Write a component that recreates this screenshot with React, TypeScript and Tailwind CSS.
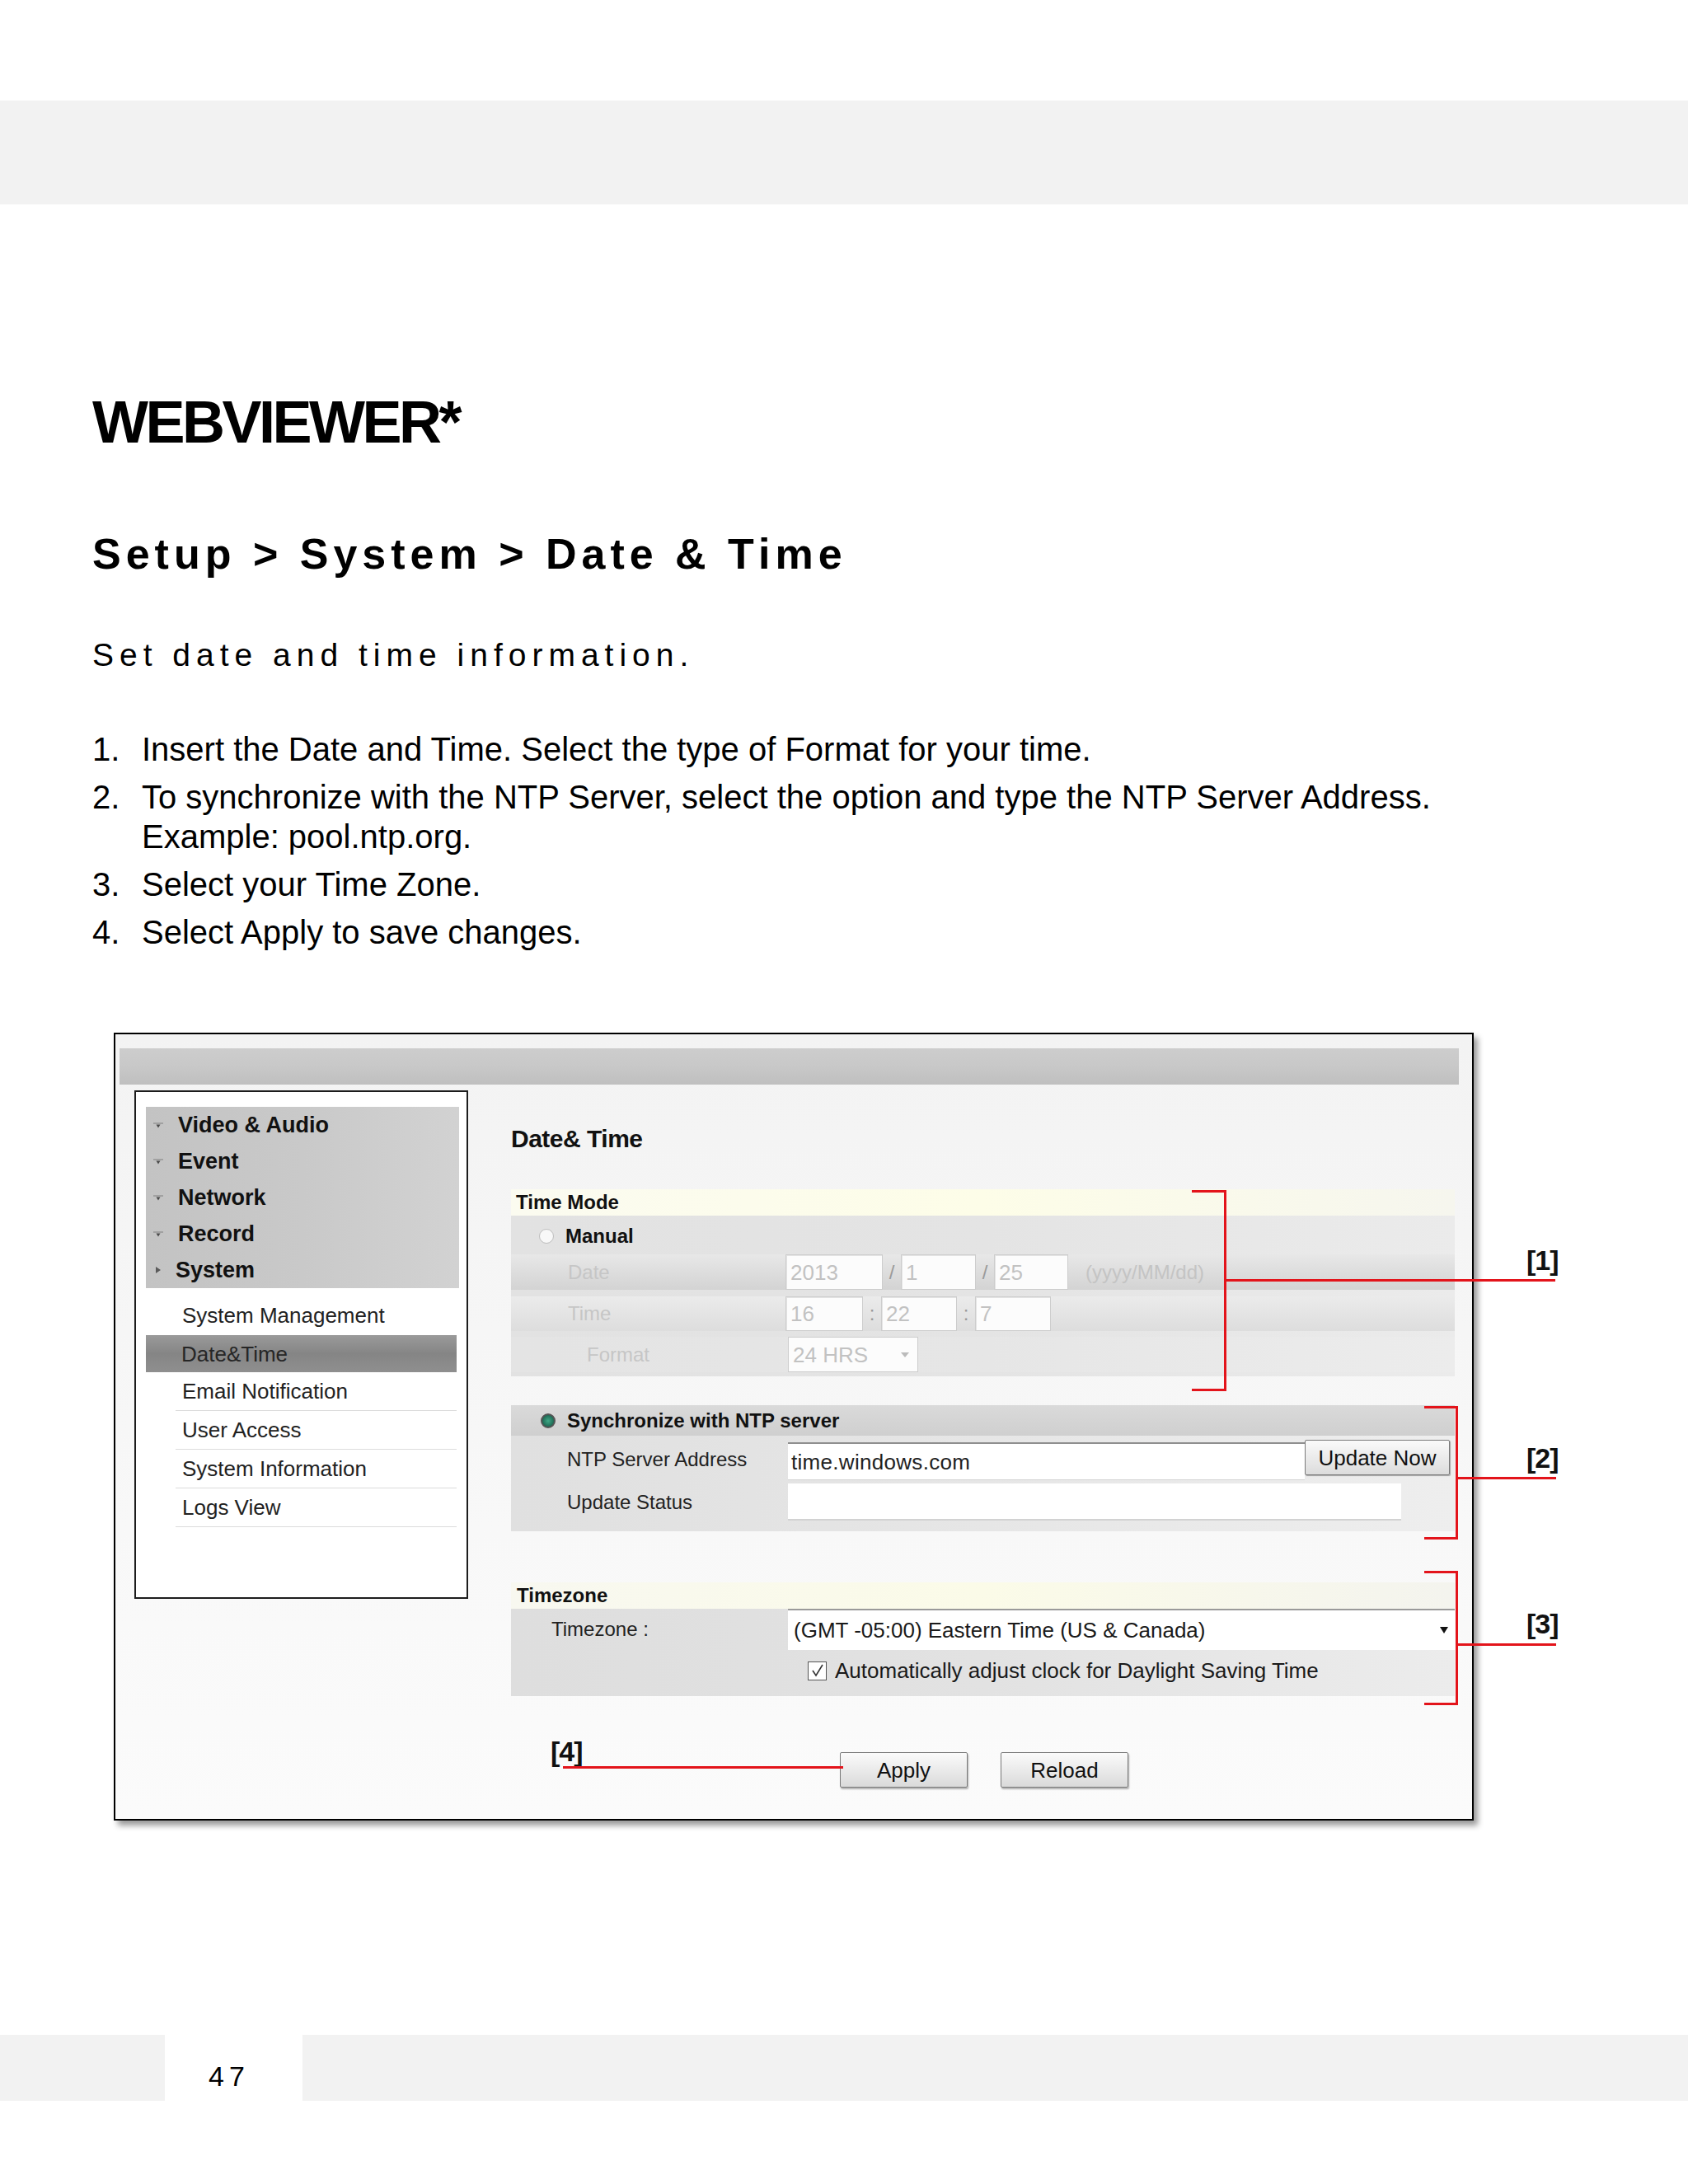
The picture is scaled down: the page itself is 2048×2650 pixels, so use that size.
import React from 'react';

const steps = [
  ['1.', ['Insert the Date and Time. Select the type of Format for your time.']],
  ['2.', ['To synchronize with the NTP Server, select the option and type the NTP Server Address.', 'Example: pool.ntp.org.']],
  ['3.', ['Select your Time Zone.']],
  ['4.', ['Select Apply to save changes.']],
] as const;

const menuGroups = ['Video & Audio', 'Event', 'Network', 'Record'];
const subItems = ['Email Notification', 'User Access', 'System Information', 'Logs View'];

function DownArrow() {
  return (
    <svg width="14" height="14" viewBox="0 0 14 14" className="shrink-0">
      <path d="M1 5h12" stroke="#8a8a8a" strokeWidth="1.2" />
      <path d="M4.5 6.5h5L7 10.5z" fill="#4a4a4a" />
    </svg>
  );
}

function RightArrow() {
  return (
    <svg width="10" height="12" viewBox="0 0 10 12" className="shrink-0">
      <path d="M2 2l6 4-6 4z" fill="#5a5a5a" />
    </svg>
  );
}

function Field({ w, value }: { w: string; value: string }) {
  return (
    <div className={`${w} h-full flex items-center pl-[5px] bg-[#fcfcfc] border border-[#cdcdcd] shadow-[inset_1px_1px_0_#e4e4e4] text-[26px] leading-none text-[#c2c2c2]`}>
      {value}
    </div>
  );
}

function Sep({ ch }: { ch: string }) {
  return <span className="w-[22px] text-center text-[24px] leading-none text-[#9a9a9a]">{ch}</span>;
}

function Sidebar() {
  return (
    <div className="ml-[23px] mt-[7px] w-[405px] h-[617px] border-2 border-[#1c1c1c] bg-white shrink-0">
      <div className="ml-[12px] mt-[18px] w-[380px] bg-linear-to-r from-[#c3c3c3] via-[#c9c9c9] to-[#d2d2d2]">
        {menuGroups.map((g) => (
          <div key={g} className="h-[44px] flex items-center">
            <div className="w-[39px] pl-[8px] flex items-center"><DownArrow /></div>
            <span className="text-[27px] leading-none font-bold text-[#111]">{g}</span>
          </div>
        ))}
        <div className="h-[44px] flex items-center">
          <div className="w-[36px] pl-[10px] flex items-center"><RightArrow /></div>
          <span className="text-[27px] leading-none font-bold text-[#111]">System</span>
        </div>
      </div>
      <div className="ml-[12px] w-[377px]">
        <div className="mt-[9px] h-[48px] flex items-center pl-[44px] text-[26px] leading-none text-[#222]">System Management</div>
        <div className="h-[45px] flex items-center pl-[43px] text-[26px] leading-none text-[#262626] bg-linear-to-b from-[#9a9a9a] via-[#858585] to-[#8f8f8f]">Date&amp;Time</div>
        {subItems.map((s) => (
          <div key={s} className="pl-[36px]">
            <div className="h-[47px] flex items-center pl-[8px] border-b border-[#dcdcdc] text-[26px] leading-none text-[#222]">{s}</div>
          </div>
        ))}
      </div>
    </div>
  );
}

function Content() {
  return (
    <div className="ml-[32px] w-[1170px] shrink-0">
      <div className="mt-[51px] pl-[20px] text-[30px] leading-none font-bold text-[#111] tracking-[-0.5px]">Date&amp; Time</div>

      {/* Time Mode */}
      <div className="mt-[46px] ml-[20px] w-[1145px]">
        <div className="h-[32px] flex items-center pl-[6px] bg-linear-to-r from-[#fbfbf0] via-[#fdfde8] to-[#f6f6ee] text-[24px] leading-none font-bold text-[#111]">Time Mode</div>
        <div className="pb-[5px] bg-linear-to-r from-[#e2e2e2] via-[#e4e4e4] to-[#ebebeb]">
          <div className="h-[40px] pt-[10px] flex items-center">
            <div className="ml-[34px] w-[18px] h-[18px] rounded-full border border-[#bdbdbd] bg-[#f8f8f8]" />
            <span className="ml-[14px] text-[24px] leading-none font-bold text-[#111]">Manual</span>
          </div>
          <div className="mt-[7px] h-[43px] flex items-center bg-linear-to-b from-[#e8e8e8] to-[#d3d3d3]">
            <span className="w-[333px] pl-[69px] text-[24px] leading-none text-[#c6c6c6]">Date</span>
            <Field w="w-[118px]" value="2013" />
            <Sep ch="/" />
            <Field w="w-[91px]" value="1" />
            <Sep ch="/" />
            <Field w="w-[90px]" value="25" />
            <span className="ml-[21px] text-[24px] leading-none text-[#c4c4c4]">(yyyy/MM/dd)</span>
          </div>
          <div className="mt-[8px] h-[42px] flex items-center bg-linear-to-b from-[#ebebeb] to-[#dddddd]">
            <span className="w-[333px] pl-[69px] text-[24px] leading-none text-[#c6c6c6]">Time</span>
            <Field w="w-[94px]" value="16" />
            <Sep ch=":" />
            <Field w="w-[92px]" value="22" />
            <Sep ch=":" />
            <Field w="w-[92px]" value="7" />
          </div>
          <div className="mt-[7px] h-[43px] flex items-center bg-linear-to-r from-[#e4e4e4] via-[#e6e6e6] to-[#ececec]">
            <span className="w-[336px] pl-[92px] text-[24px] leading-none text-[#c6c6c6]">Format</span>
            <div className="w-[158px] h-full flex items-center justify-between pl-[5px] pr-[10px] bg-[#fcfcfc] border border-[#cdcdcd] text-[26px] leading-none text-[#c2c2c2]">
              <span>24 HRS</span>
              <svg width="10" height="6" viewBox="0 0 10 6"><path d="M0 0h10L5 6z" fill="#bbb" /></svg>
            </div>
          </div>
        </div>
      </div>

      {/* NTP */}
      <div className="mt-[35px] ml-[20px] w-[1145px] pb-[10px] bg-linear-to-r from-[#e0e0e0] via-[#e6e6e6] to-[#eeeeee]">
        <div className="h-[37px] flex items-center bg-linear-to-b from-[#dadada] to-[#cfcfcf]">
          <div className="ml-[36px] w-[18px] h-[18px] rounded-full border-2 border-[#555] bg-[radial-gradient(circle,#3fa886_0%,#1f6b55_70%)]" />
          <span className="ml-[14px] text-[24px] leading-none font-bold text-[#111]">Synchronize with NTP server</span>
        </div>
        <div className="mt-[5px] h-[51px] flex items-start">
          <span className="w-[336px] h-[48px] flex items-center pl-[68px] text-[24px] leading-none text-[#222]">NTP Server Address</span>
          <div className="mt-[3px] w-[627px] h-[46px] flex items-center pl-[4px] bg-white border-t-2 border-[#8f8f8f] border-b border-b-[#d4d4d4] text-[26px] leading-none text-[#222] tracking-[0.3px]">time.windows.com</div>
          <button className="w-[176px] h-[43px] flex items-center justify-center bg-linear-to-b from-[#fafafa] to-[#dcdcdc] border border-[#7a7a7a] rounded-[2px] shadow-[1px_1px_1px_rgba(0,0,0,0.3)] text-[26px] leading-none text-[#111]">Update Now</button>
        </div>
        <div className="h-[50px] flex items-start">
          <span className="w-[336px] h-[50px] flex items-center pl-[68px] text-[24px] leading-none text-[#222]">Update Status</span>
          <div className="mt-[2px] w-[744px] h-[45px] bg-white border-b-2 border-[#d2d2d2]" />
        </div>
      </div>

      {/* Timezone */}
      <div className="mt-[62px] ml-[20px] w-[1145px]">
        <div className="h-[32px] flex items-center pl-[7px] bg-linear-to-r from-[#f8f8f0] via-[#fbfbe8] to-[#f4f4ee] text-[24px] leading-none font-bold text-[#111]">Timezone</div>
        <div className="bg-linear-to-r from-[#dedede] via-[#e2e2e2] to-[#ececec] pb-[6px]">
          <div className="h-[50px] flex items-stretch">
            <span className="w-[336px] flex items-center pl-[49px] text-[24px] leading-none text-[#222]">Timezone :</span>
            <div className="w-[809px] flex items-center justify-between pl-[7px] pr-[8px] bg-white border-t-2 border-[#9a9a9a] text-[26px] leading-none text-[#1a1a1a]">
              <span>(GMT -05:00) Eastern Time (US &amp; Canada)</span>
              <svg width="10" height="8" viewBox="0 0 10 8"><path d="M0 0h10L5 8z" fill="#111" /></svg>
            </div>
          </div>
          <div className="h-[50px] flex items-center">
            <div className="ml-[360px] w-[23px] h-[23px] border border-[#555] bg-white flex items-center justify-center">
              <svg width="18" height="18" viewBox="0 0 18 18"><path d="M3 9l4 6 8-13" stroke="#333" strokeWidth="1.6" fill="none" /></svg>
            </div>
            <span className="ml-[10px] text-[26px] leading-none text-[#1a1a1a]">Automatically adjust clock for Daylight Saving Time</span>
          </div>
        </div>
      </div>

      <div className="mt-[68px] flex pl-[419px] gap-[40px]">
        {['Apply', 'Reload'].map((b) => (
          <button key={b} className="w-[155px] h-[43px] flex items-center justify-center bg-linear-to-b from-[#fbfbfb] to-[#dadada] border border-[#7a7a7a] rounded-[2px] shadow-[1px_2px_2px_rgba(0,0,0,0.3)] text-[26px] leading-none text-[#111]">{b}</button>
        ))}
      </div>
    </div>
  );
}

function Annotations() {
  const label = "absolute text-[34px] leading-[34px] font-bold text-[#111] tracking-[-1px]";
  return (
    <>
      <div className="absolute left-[1306px] top-[189px] w-[42px] h-[244px] border-y-[3px] border-r-[3px] border-[#e3141b]" />
      <div className="absolute left-[1347px] top-[297px] w-[400px] h-[3px] bg-[#e3141b]" />
      <div className={`${label} left-[1712px] top-[257px]`}>[1]</div>

      <div className="absolute left-[1588px] top-[451px] w-[41px] h-[162px] border-y-[3px] border-r-[3px] border-[#e3141b]" />
      <div className="absolute left-[1628px] top-[537px] w-[120px] h-[3px] bg-[#e3141b]" />
      <div className={`${label} left-[1712px] top-[497px]`}>[2]</div>

      <div className="absolute left-[1588px] top-[651px] w-[41px] h-[163px] border-y-[3px] border-r-[3px] border-[#e3141b]" />
      <div className="absolute left-[1628px] top-[739px] w-[120px] h-[3px] bg-[#e3141b]" />
      <div className={`${label} left-[1712px] top-[698px]`}>[3]</div>

      <div className={`${label} left-[528px] top-[853px]`}>[4]</div>
      <div className="absolute left-[543px] top-[888px] w-[340px] h-[3px] bg-[#e3141b]" />
    </>
  );
}

export default function App() {
  return (
    <div className="w-[2048px] h-[2650px] bg-white text-black font-['Liberation_Sans',Arial,sans-serif] overflow-hidden">
      <div className="h-[122px]" />
      <div className="h-[126px] bg-[#f2f2f2]" />

      <div className="pl-[112px]">
        <h1 className="mt-[228px] text-[72px] leading-[72px] font-bold tracking-[-3.5px]">WEBVIEWER*</h1>
        <h2 className="mt-[98px] text-[52px] leading-[52px] font-bold tracking-[6px]">{'Setup > System > Date & Time'}</h2>
        <p className="mt-[77px] text-[39px] leading-[39px] tracking-[7px]">Set date and time information.</p>

        <ol className="mt-[71px] flex flex-col gap-[10px] text-[40px] leading-[48px]">
          {steps.map(([n, lines]) => (
            <li key={n} className="flex">
              <span className="w-[60px] shrink-0">{n}</span>
              <div>
                {lines.map((l) => (
                  <div key={l}>{l}</div>
                ))}
              </div>
            </li>
          ))}
        </ol>

        <div className="relative ml-[26px] mt-[98px] w-[1650px] h-[956px] border-2 border-black bg-linear-to-b from-[#f3f3f3] to-[#fbfbfb] shadow-[5px_6px_7px_rgba(0,0,0,0.4)]">
          <div className="mt-[17px] ml-[5px] mr-[16px] h-[44px] bg-linear-to-b from-[#cdcdcd] via-[#c8c8c8] to-[#bfbfbf]" />
          <div className="flex">
            <Sidebar />
            <Content />
          </div>
          <Annotations />
        </div>
      </div>

      <div className="mt-[260px] h-[80px] flex">
        <div className="w-[200px] bg-[#f2f2f2]" />
        <div className="w-[167px] pl-[53px] pt-[33px] text-[34px] leading-none tracking-[6px]">47</div>
        <div className="flex-1 bg-[#f2f2f2]" />
      </div>
    </div>
  );
}
